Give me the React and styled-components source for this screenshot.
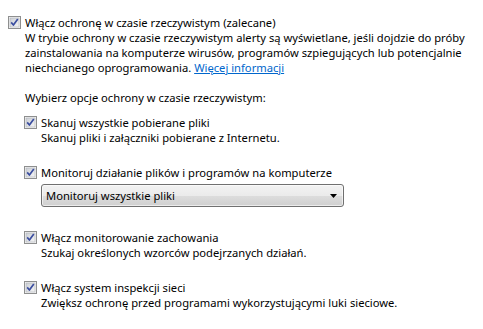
import React from 'react'
import styled, { createGlobalStyle } from 'styled-components'

const GlobalStyle = createGlobalStyle`
  html, body {
    margin: 0;
    padding: 0;
    background: #ffffff;
  }
  body {
    font-family: "Noto Sans", "Open Sans", sans-serif;
    font-size: 11.2px;
    color: #000000;
  }
`

const Page = styled.div`
  width: 483px;
  height: 329px;
  padding: 15px 0 0 8px;
  box-sizing: border-box;
  overflow: hidden;
`

const Option = styled.div`
  display: flex;
  align-items: flex-start;
  gap: 4px;
  margin-top: ${p => p.$gap || 0}px;
`

const Body = styled.div`
  display: flex;
  flex-direction: column;
  line-height: 15px;
`

const Label = styled.div`
  height: 15px;
  white-space: nowrap;
`

const Description = styled.div`
  white-space: nowrap;
`

const Link = styled.a`
  color: #0066cc;
  text-decoration: underline;
  cursor: pointer;
`

const SectionTitle = styled.div`
  margin-top: 15px;
  line-height: 15px;
`

const SubOptions = styled.div`
  display: flex;
  flex-direction: column;
  margin-left: -1px;
`

const BoxWrap = styled.span`
  display: flex;
  align-items: center;
  height: 15px;
  flex-shrink: 0;
`

const Select = styled.div`
  width: 303px;
  height: 23px;
  margin-top: 4px;
  box-sizing: border-box;
  border: 1px solid #707070;
  border-radius: 3px;
  background: linear-gradient(to bottom, #f2f2f2 0%, #ebebeb 50%, #dddddd 51%, #cfcfcf 100%);
  display: flex;
  align-items: center;
  justify-content: space-between;
  padding: 0 6px 0 4px;
  box-shadow: inset 0 0 0 1px rgba(255, 255, 255, 0.6);
`

const SelectText = styled.span`
  line-height: 15px;
`

function CheckBox() {
  return (
    <BoxWrap>
      <svg width="13" height="13" viewBox="0 0 13 13">
        <defs>
          <linearGradient id="cbg" x1="0" y1="0" x2="1" y2="1">
            <stop offset="0" stopColor="#cbcfd5" />
            <stop offset="1" stopColor="#f6f6f6" />
          </linearGradient>
        </defs>
        <rect x="0.5" y="0.5" width="12" height="12" fill="#f4f4f4" stroke="#8e8f8f" />
        <rect x="2" y="2" width="9" height="9" fill="url(#cbg)" stroke="#aeb3b9" strokeWidth="0.6" />
        <path d="M3.2 6.4 L5.4 9 L9.8 3" fill="none" stroke="#3b4ea0" strokeWidth="1.7" strokeLinejoin="round" />
      </svg>
    </BoxWrap>
  )
}

function Arrow() {
  return (
    <svg width="7" height="4" viewBox="0 0 7 4">
      <path d="M0 0 H7 L3.5 4 Z" fill="#000000" />
    </svg>
  )
}

export default function App() {
  return (
    <>
      <GlobalStyle />
      <Page>
        <Option>
          <CheckBox />
          <Body>
            <Label>Włącz ochronę w czasie rzeczywistym (zalecane)</Label>
            <Description>
              W trybie ochrony w czasie rzeczywistym alerty są wyświetlane, jeśli dojdzie do próby
              <br />
              zainstalowania na komputerze wirusów, programów szpiegujących lub potencjalnie
              <br />
              niechcianego oprogramowania. <Link href="#">Więcej informacji</Link>
            </Description>
            <SectionTitle>Wybierz opcje ochrony w czasie rzeczywistym:</SectionTitle>
            <SubOptions>
              <Option $gap={10}>
                <CheckBox />
                <Body>
                  <Label>Skanuj wszystkie pobierane pliki</Label>
                  <Description>Skanuj pliki i załączniki pobierane z Internetu.</Description>
                </Body>
              </Option>
              <Option $gap={20}>
                <CheckBox />
                <Body>
                  <Label>Monitoruj działanie plików i programów na komputerze</Label>
                  <Select>
                    <SelectText>Monitoruj wszystkie pliki</SelectText>
                    <Arrow />
                  </Select>
                </Body>
              </Option>
              <Option $gap={23}>
                <CheckBox />
                <Body>
                  <Label>Włącz monitorowanie zachowania</Label>
                  <Description>Szukaj określonych wzorców podejrzanych działań.</Description>
                </Body>
              </Option>
              <Option $gap={20}>
                <CheckBox />
                <Body>
                  <Label>Włącz system inspekcji sieci</Label>
                  <Description>Zwiększ ochronę przed programami wykorzystującymi luki sieciowe.</Description>
                </Body>
              </Option>
            </SubOptions>
          </Body>
        </Option>
      </Page>
    </>
  )
}
